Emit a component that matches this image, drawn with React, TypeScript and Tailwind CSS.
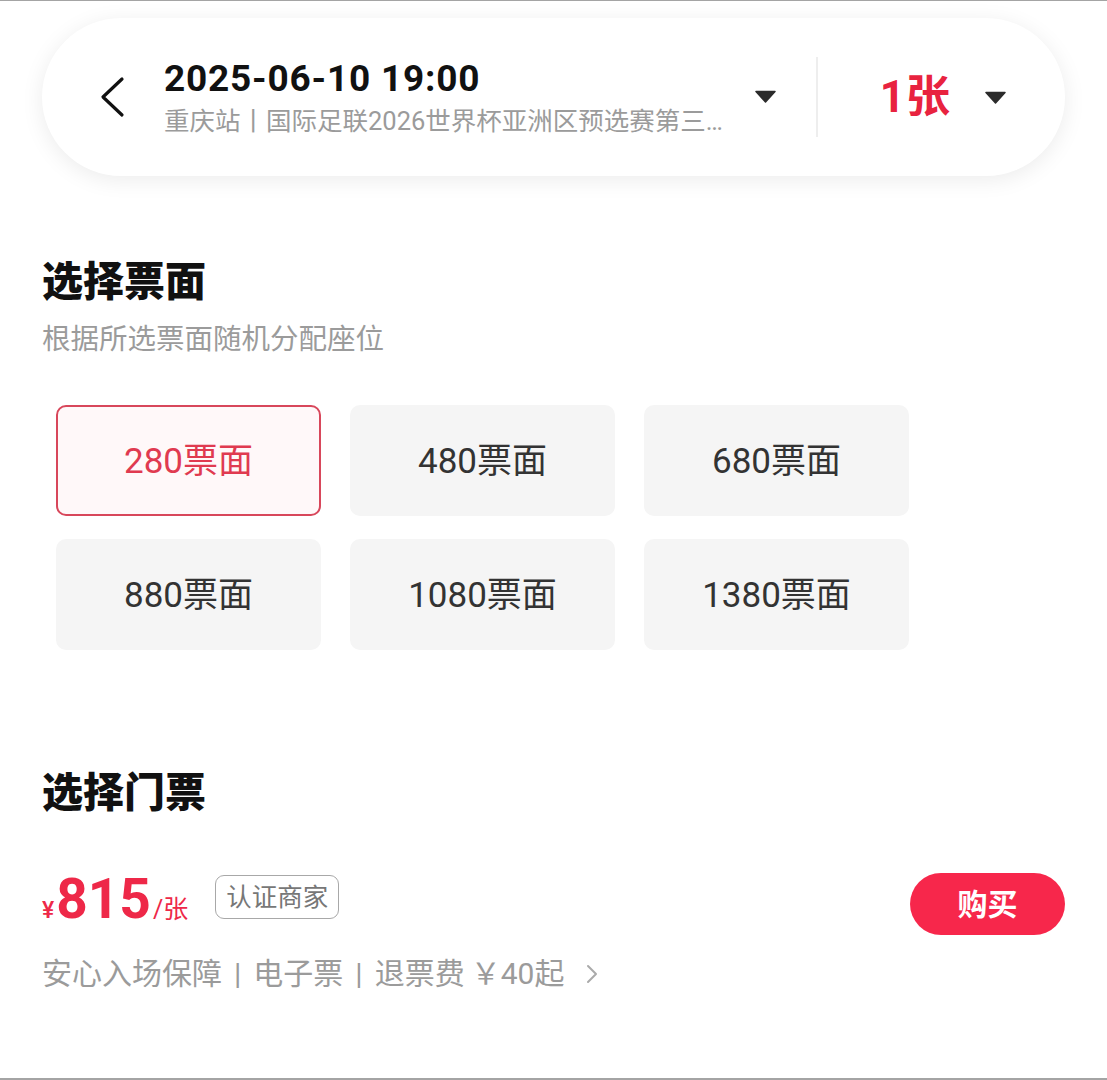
import React from 'react';

const Caret: React.FC = () => (
  <svg width="21" height="13" viewBox="0 0 21 13" className="shrink-0">
    <path d="M1 1.5 L20 1.5 L10.5 12 Z" fill="#2b2b2b" stroke="#2b2b2b" strokeWidth="1.5" strokeLinejoin="round" />
  </svg>
);

const App: React.FC = () => {
  const faces = ['280票面', '480票面', '680票面', '880票面', '1080票面', '1380票面'];
  const selected = 0;

  return (
    <div
      className="w-full h-[1080px] bg-white border-t border-b-2 border-[#a4a4a4] px-[42px] pt-[17px] overflow-hidden"
      style={{ fontFamily: 'Roboto, "Noto Sans CJK SC", sans-serif' }}
    >
      {/* Session bar */}
      <div className="h-[158px] rounded-full bg-white shadow-[0_4px_22px_rgba(0,0,0,0.08)] flex items-center pl-[56px] pr-[59px]">
        <svg width="28" height="42" viewBox="0 0 28 42" className="shrink-0">
          <path d="M24 3 L5 21 L24 39" fill="none" stroke="#111" strokeWidth="3.2" strokeLinecap="round" strokeLinejoin="round" />
        </svg>
        <div className="ml-[38px] flex-1 min-w-0">
          <div className="text-[37px] leading-[40px] font-bold text-[#111] tracking-[0.8px] whitespace-nowrap">2025-06-10 19:00</div>
          <div className="mt-[7px] text-[25.5px] leading-[30px] text-[#9b9b9b] whitespace-nowrap overflow-hidden">
            重庆站丨国际足联2026世界杯亚洲区预选赛第三…
          </div>
        </div>
        <div className="ml-[20px] -mt-[2px] shrink-0">
          <Caret />
        </div>
        <div className="ml-[40px] w-[2px] h-[80px] bg-[#eeeeee] shrink-0" />
        <div className="ml-[62px] text-[44px] leading-none font-bold text-[#e8233f] tracking-[1px] whitespace-nowrap shrink-0">1张</div>
        <div className="ml-[34px] shrink-0">
          <Caret />
        </div>
      </div>

      {/* Ticket face */}
      <h2 className="mt-[86px] text-[41px] leading-[40px] font-black text-[#111]">选择票面</h2>
      <p className="mt-[24px] text-[28.5px] leading-[28px] text-[#9b9b9b]">根据所选票面随机分配座位</p>

      <div className="mt-[51px] ml-[14px] grid grid-cols-[265px_265px_265px] gap-x-[29px] gap-y-[23px]">
        {faces.map((face, i) => (
          <div
            key={face}
            className={
              i === selected
                ? 'h-[111px] pt-[4px] rounded-[10px] border-2 border-[#d8475b] bg-[#fff8f9] flex items-center justify-center text-[35px] text-[#e03a50]'
                : 'h-[111px] pt-[4px] rounded-[10px] bg-[#f5f5f5] flex items-center justify-center text-[35px] text-[#333333]'
            }
          >
            {face}
          </div>
        ))}
      </div>

      {/* Tickets */}
      <h2 className="mt-[123px] text-[41px] leading-[40px] font-black text-[#111]">选择门票</h2>

      <div className="mt-[60px] h-[62px] flex items-center">
        <div className="flex items-baseline text-[#ee2848] -mt-[8px]">
          <span className="text-[23px] font-medium">¥</span>
          <span className="text-[55px] leading-none font-bold ml-[2px]">815</span>
          <span className="text-[25px] ml-[2px]">/张</span>
        </div>
        <div className="ml-[27px] -mt-[14px] h-[44px] px-[10px] rounded-[9px] border border-[#a8a8a8] flex items-center text-[25.5px] text-[#777777]">
          认证商家
        </div>
        <button className="ml-auto w-[155px] h-[62px] rounded-full bg-[#f7274b] text-white text-[30px] font-bold flex items-center justify-center">
          购买
        </button>
      </div>

      <div className="mt-[22px] flex items-center text-[30px] leading-[34px] text-[#9b9b9b]">
        <span>安心入场保障</span>
        <span className="mx-[12px]">|</span>
        <span>电子票</span>
        <span className="mx-[12px]">|</span>
        <span>退票费</span>
        <span className="ml-[6px]">￥</span>
        <span>40起</span>
        <svg width="12" height="20" viewBox="0 0 12 20" className="ml-[22px]">
          <path d="M2 2 L10 10 L2 18" fill="none" stroke="#aaaaaa" strokeWidth="2" strokeLinecap="round" strokeLinejoin="round" />
        </svg>
      </div>
    </div>
  );
};

export default App;
